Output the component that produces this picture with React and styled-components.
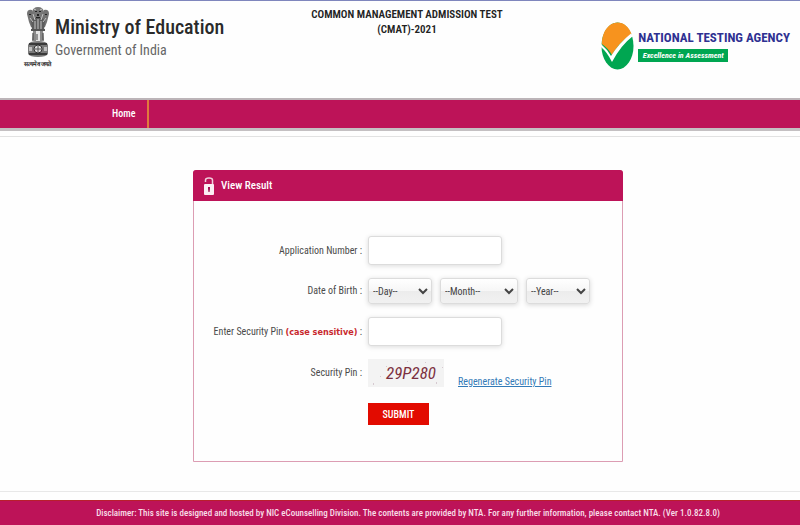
import React from 'react';
import styled, { createGlobalStyle } from 'styled-components';

const GlobalStyle = createGlobalStyle`
  * {
    box-sizing: border-box;
  }

  body {
    margin: 0;
    background: #fefefe;
    font-family: "Roboto Condensed", Roboto, sans-serif;
    font-size: 10px;
    color: #4a4a4a;
  }
`;

const days = Array.from({ length: 31 }, (_, i) => i + 1);
const months = ['Jan', 'Feb', 'Mar', 'Apr', 'May', 'Jun', 'Jul', 'Aug', 'Sep', 'Oct', 'Nov', 'Dec'];
const years = Array.from({ length: 50 }, (_, i) => 2005 - i);

const Emblem = () => (
    <svg width="24" height="51" viewBox="0 0 24 51" aria-hidden="true">
        <path d="M6 5 Q7 0 12 0 Q17 0 18 5 L17 13 H7Z" fill="#777" />
        <path d="M1 7 Q1 2 6 3 L9 12 L8 21 L5 20 L3 15Z M23 7 Q23 2 18 3 L15 12 L16 21 L19 20 L21 15Z" fill="#727272" />
        <path d="M5 13 Q12 8 19 13 L18 23 Q12 26 6 23Z" fill="#5c5c5c" />
        <path d="M9 4h2v1h-2z M13 4h2v1h-2z M11 7h2v2h-2z M3 7h2v1h-2z M19 7h2v1h-2z M10 10h4v1h-4z" fill="#222" />
        <path d="M7 7l2 6 M17 7l-2 6 M9 14v8 M12 12v10 M15 14v8 M4 11l3 4 M20 11l-3 4 M8 2l2 1 M16 2l-2 1" stroke="#c4c4c4" strokeWidth="1" fill="none" />
        <path d="M5 22h14v2h-14z" fill="#555" />
        <path d="M7 24h3v10h-4z M14 24h3l1 10h-4z" fill="#8a8a8a" />
        <path d="M10 24h4v10h-4z" fill="#e4e4e4" />
        <path d="M7 26v7 M17 26v7 M11 27v6" stroke="#444" strokeWidth="1" />
        <path d="M2 38 Q3 34 12 34 Q21 34 22 38 V47 Q20 50 12 50 Q4 50 2 47Z" fill="#7a7a7a" />
        <path d="M3 37h18 M3 47h18" stroke="#3a3a3a" strokeWidth="2" />
        <circle cx="12" cy="42" r="4" fill="#ddd" stroke="#333" strokeWidth="1" />
        <path d="M12 39v6 M9 42h6" stroke="#555" strokeWidth="1" />
        <path d="M3 40h3v4h-3z M18 40h3v4h-3z" fill="#c0c0c0" />
    </svg>
);

const AgencyMark = () => (
    <svg width="33" height="48" viewBox="0 0 33 48" aria-hidden="true">
        <ellipse cx="16.5" cy="24" rx="16" ry="23.5" fill="#00a651" />
        <path d="M0.8 22 C1 9 8 0.5 16.5 0.5 C23 0.5 28 5 30.5 12 C23 17 16 24 11 33 Q7 26 0.8 22Z" fill="#f7931e" />
        <path d="M0 22 Q6 27 10 34 Q18 21 30 11.5 L32 14 Q20 23 11 40 Q6 30 0 25Z" fill="#fff" />
    </svg>
);

const LockIcon = () => (
    <svg width="10" height="18" viewBox="0 0 10 18" aria-hidden="true">
        <path d="M1.5 5V3Q1.5 1 5 1Q8.500 1 8.500 3V9" fill="none" stroke="#f0cfdc" strokeWidth="1.5" />
        <rect x="0" y="7" width="10" height="11" rx="1" fill="#fbeef3" />
        <path d="M4 10h2v2l-0.500 3h-1L4 12z" fill="#a01050" />
    </svg>
);

const CaptchaDots = () => (
    <svg width="76" height="28" viewBox="0 0 76 28" aria-hidden="true">
        <path d="M5 24h1v2h-1z M18 7h1v1h-1z M74 8h1v1h-1z M68 23h1v2h-1z M57 3h1v1h-1z M39 2h1v1h-1z M12 17h1v1h-1z" fill="#d6c9d0" />
    </svg>
);

const App = () => {
    return (
        <Page>
            <GlobalStyle />
            <Header>
                <Brand>
                    <EmblemBox>
                        <Emblem />
                        <Motto lang="sa">सत्यमेव जयते</Motto>
                    </EmblemBox>
                    <div>
                        <Ministry>Ministry of Education</Ministry>
                        <Government>Government of India</Government>
                    </div>
                </Brand>
                <ExamTitle>
                    COMMON MANAGEMENT ADMISSION TEST<br />(CMAT)-2021
                </ExamTitle>
                <Agency>
                    <AgencyMark />
                    <div>
                        <AgencyName>NATIONAL TESTING AGENCY</AgencyName>
                        <Tagline>Excellence in Assessment</Tagline>
                    </div>
                </Agency>
            </Header>
            <NavBar>
                <NavLink href="#home">Home</NavLink>
            </NavBar>
            <Main>
                <Panel>
                    <PanelHeader>
                        <LockIcon />
                        <PanelTitle>View Result</PanelTitle>
                    </PanelHeader>
                    <Form onSubmit={(e) => e.preventDefault()}>
                        <Label htmlFor="appNo">Application Number :</Label>
                        <TextInput id="appNo" type="text" />

                        <Label htmlFor="day">Date of Birth :</Label>
                        <DateRow>
                            <Select id="day" $width="64px">
                                <option>--Day--</option>
                                {days.map((day) => <option key={day}>{day}</option>)}
                            </Select>
                            <Select $width="78px" aria-label="Month">
                                <option>--Month--</option>
                                {months.map((month) => <option key={month}>{month}</option>)}
                            </Select>
                            <Select $width="64px" aria-label="Year">
                                <option>--Year--</option>
                                {years.map((year) => <option key={year}>{year}</option>)}
                            </Select>
                        </DateRow>

                        <Label htmlFor="pin">Enter Security Pin <Note>(case sensitive)</Note> :</Label>
                        <TextInput id="pin" type="text" />

                        <Label as="span">Security Pin :</Label>
                        <PinRow>
                            <Captcha>
                                <CaptchaDots />
                                <CaptchaText>29P280</CaptchaText>
                            </Captcha>
                            <Regenerate href="#regenerate">Regenerate Security Pin</Regenerate>
                        </PinRow>

                        <Submit type="submit">SUBMIT</Submit>
                    </Form>
                </Panel>
            </Main>
            <Footer>
                Disclaimer: This site is designed and hosted by NIC eCounselling Division. The contents are provided by NTA. For any further information, please contact NTA. (Ver 1.0.82.8.0)
            </Footer>
        </Page>
    );
}

const Page = styled.div`
  min-height: 100vh;
  display: flex;
  flex-direction: column;
  border-top: 1px solid #7f86bd;
`;

const Header = styled.header`
  display: grid;
  grid-template-columns: 1fr auto 1fr;
  align-items: start;
  min-height: 97px;
  padding: 6px 8px 0 22px;
`;

const Brand = styled.div`
  display: flex;
  gap: 2px;
`;

const EmblemBox = styled.div`
  width: 31px;
  display: flex;
  flex-direction: column;
  align-items: center;
`;

const Motto = styled.span`
  font-size: 6px;
  line-height: 12px;
  font-weight: 700;
  white-space: nowrap;
  color: #222;
`;

const Ministry = styled.div`
  padding-top: 7px;
  font-size: 20px;
  font-weight: 500;
  line-height: 26px;
  white-space: nowrap;
  color: #2a2a2a;
`;

const Government = styled.div`
  font-size: 14px;
  line-height: 20px;
  white-space: nowrap;
  color: #666;
`;

const ExamTitle = styled.h1`
  margin: 0;
  font-size: 11px;
  font-weight: 600;
  line-height: 15px;
  text-align: center;
  color: #222;
`;

const Agency = styled.div`
  display: flex;
  gap: 4px;
  justify-self: end;
  padding: 15px 2px 0 0;
`;

const AgencyName = styled.div`
  padding-top: 6px;
  font-size: 13px;
  font-weight: 700;
  line-height: 20px;
  white-space: nowrap;
  color: #2e3192;
`;

const Tagline = styled.div`
  width: 90px;
  margin-top: 1px;
  background: #00a651;
  font-size: 8px;
  font-weight: 700;
  font-style: italic;
  line-height: 13px;
  text-align: center;
  white-space: nowrap;
  color: #fff;
`;

const NavBar = styled.nav`
  display: flex;
  height: 33px;
  padding-left: 98px;
  border-top: 2px solid #bcb4b8;
  border-bottom: 3px solid #c4c0c2;
  background: #bd1358;
`;

const NavLink = styled.a`
  padding: 0 12px 0 14px;
  border-right: 2px solid #e07a3c;
  font-size: 10px;
  font-weight: 500;
  line-height: 28px;
  text-decoration: none;
  color: #fff;
`;

const Main = styled.main`
  flex: 1;
  margin: 5px 0 8px;
  padding: 33px 0 28px 16px;
  border-top: 1px solid #e2e2e2;
  border-bottom: 1px solid #e8e8e8;
`;

const Panel = styled.section`
  max-width: 430px;
  margin: 0 auto;
  border: 1px solid #dc9db3;
  border-radius: 3px 3px 0 0;
`;

const PanelHeader = styled.div`
  display: flex;
  align-items: center;
  gap: 7px;
  height: 31px;
  margin: -1px -1px 0;
  padding: 0 11px;
  border-radius: 3px 3px 0 0;
  background: #bd1358;
`;

const PanelTitle = styled.h2`
  margin: 0;
  font-size: 11px;
  font-weight: 500;
  color: #fff;
`;

const Form = styled.form`
  display: grid;
  grid-template-columns: 168px 1fr;
  column-gap: 6px;
  row-gap: 13px;
  align-items: center;
  padding: 35px 0 36px;
`;

const Label = styled.label`
  text-align: right;
  line-height: 14px;
  white-space: nowrap;
`;

const Note = styled.b`
  font-family: "DejaVu Sans Condensed", sans-serif;
  font-size: 9px;
  color: #c8282d;
`;

const TextInput = styled.input`
  width: 134px;
  height: 29px;
  padding: 0 6px;
  border: 1px solid #dcdcdc;
  border-radius: 3px;
  background: #fff;
  box-shadow: 0 1px 5px rgba(0, 0, 0, 0.14);
  font: inherit;
`;

const DateRow = styled.div`
  display: flex;
  gap: 8px;
`;

const Select = styled.select`
  width: ${(props) => props.$width};
  height: 26px;
  padding: 0;
  border: 1px solid #dcdcdc;
  border-radius: 3px;
  background: linear-gradient(#fff 0%, #f6f6f6 50%, #ececec 51%, #f1f1f1 100%);
  box-shadow: 0 1px 5px rgba(0, 0, 0, 0.16);
  font-family: inherit;
  font-size: 10px;
  color: #444;
`;

const PinRow = styled.div`
  display: flex;
  align-items: flex-end;
  gap: 14px;
`;

const Captcha = styled.div`
  display: grid;
  width: 76px;
  height: 28px;
  background: #f3f3f3;

  > * {
    grid-area: 1 / 1;
  }
`;

const CaptchaText = styled.span`
  padding-left: 10px;
  font-size: 17px;
  font-style: italic;
  line-height: 28px;
  text-align: center;
  color: #7c3040;
`;

const Regenerate = styled.a`
  line-height: 10px;
  color: #337ab7;
`;

const Submit = styled.button`
  grid-column: 2;
  justify-self: start;
  width: 61px;
  height: 22px;
  margin-top: 3px;
  padding: 0;
  border: 0;
  background: #e20b00;
  font-family: inherit;
  font-size: 10px;
  font-weight: 500;
  color: #fff;
`;

const Footer = styled.footer`
  padding: 6px 8px 5px 24px;
  border-top: 1px solid #b8202c;
  background: #bd1358;
  font-weight: 500;
  font-size: 9px;
  line-height: 13px;
  text-align: center;
  color: #f8dfe8;
`;

export default App;
